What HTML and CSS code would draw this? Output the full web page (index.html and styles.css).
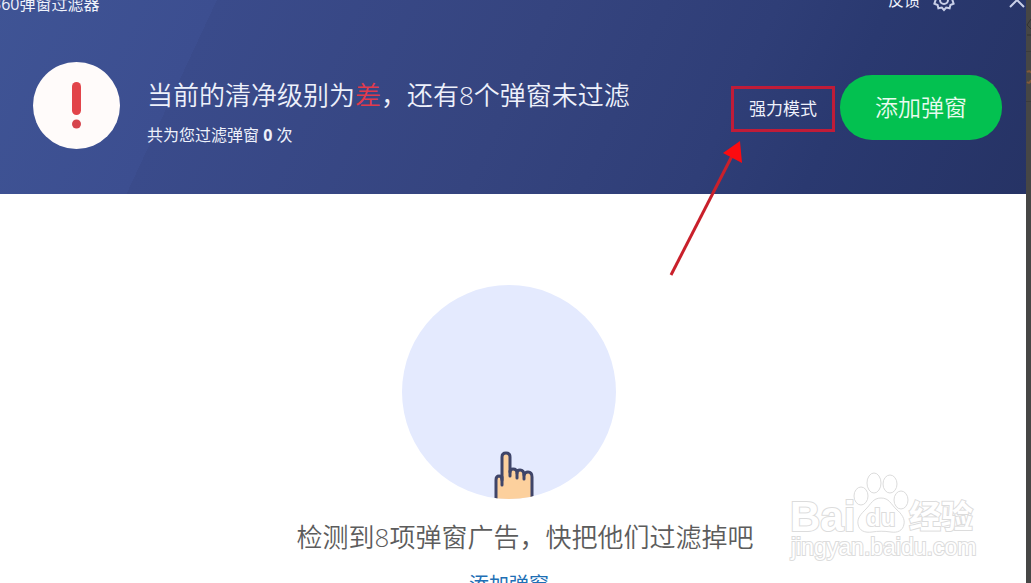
FILE: index.html
```html
<!DOCTYPE html>
<html lang="zh-CN">
<head>
  <meta charset="UTF-8">
  <title>弹窗过滤器</title>
  <meta name="viewport" content="width=device-width, initial-scale=1" />
  <link rel="stylesheet" href="styles.css">
</head>
<body>
  <div class="window">
    <header class="header">
      <div class="topbar">
        <span class="app-name">360弹窗过滤器</span>
        <div class="tools">
          <a class="feedback" href="#">反馈</a>
          <button class="icon-btn gear" type="button" aria-label="设置">
            <svg width="24" height="24" viewBox="0 0 24 24"><path d="M12 2 L14.2 4.4 L17.6 3.7 L18.4 7 L21.6 8.3 L20.4 12 L21.6 15.7 L18.4 17 L17.6 20.3 L14.2 19.6 L12 22 L9.8 19.6 L6.4 20.3 L5.6 17 L2.4 15.7 L3.6 12 L2.4 8.3 L5.6 7 L6.4 3.7 L9.8 4.4 Z"/><circle cx="12" cy="12" r="4"/></svg>
          </button>
          <button class="icon-btn" type="button" aria-label="关闭">
            <svg width="18" height="18" viewBox="0 0 18 18"><path d="M2 2 L16 16 M16 2 L2 16"/></svg>
          </button>
        </div>
      </div>
      <div class="hero">
        <svg class="alert" width="87" height="87" viewBox="0 0 87 87">
          <circle cx="43.5" cy="43.5" r="43.5" fill="#fffbfa"/>
          <rect x="39" y="20" width="9" height="33" rx="4.5" fill="#e2444a"/>
          <circle cx="43.5" cy="62" r="4.5" fill="#d6454d"/>
        </svg>
        <div class="status">
          <h1>当前的清净级别为<span class="bad">差</span>，还有8个弹窗未过滤</h1>
          <p>共为您过滤弹窗 <b>0</b> 次</p>
        </div>
        <div class="mode">
          <button class="mode-btn" type="button">强力模式</button>
          <svg class="arrow" width="76" height="138" viewBox="0 0 76 138">
            <path d="M2 136 L64 15" stroke="#c9202b" stroke-width="3" fill="none"/>
            <path d="M71 2 L54 14 L73 24 Z" fill="#fb0b10"/>
          </svg>
        </div>
        <button class="add-btn" type="button">添加弹窗</button>
      </div>
    </header>

    <main class="content">
      <svg class="picture" width="214" height="214" viewBox="0 0 214 214">
        <clipPath id="round"><circle cx="107" cy="107" r="107"/></clipPath>
        <circle cx="107" cy="107" r="107" fill="#e4eafe"/>
        <g clip-path="url(#round)">
          <path d="M94 216 V195 Q94 191 97 191 Q100 191 100 195 V172 Q100 168 104 168 Q108 168 108 172 V187 Q108 184 111 184 Q115 184 115 188 Q115 185 118 185 Q122 185 122 190 Q123 187 126 187 Q130 187 130 192 V216 Z" fill="#fcd09d" stroke="#3f4569" stroke-width="3" stroke-linejoin="round"/>
          <path d="M100 192 V200 M108 186 V191 M115 188 V193 M122 189 V194" stroke="#3f4569" stroke-width="3" stroke-linecap="round"/>
        </g>
      </svg>
      <p class="message">检测到8项弹窗广告，快把他们过滤掉吧</p>
      <a class="add-link" href="#">添加弹窗</a>
    </main>

    <svg class="watermark" width="192" height="96" viewBox="0 0 192 96">
      <text class="wm-logo" x="4" y="62">Bai</text>
      <ellipse cx="75" cy="27" rx="7" ry="9"/>
      <ellipse cx="88" cy="14" rx="7" ry="10"/>
      <ellipse cx="104" cy="15" rx="7" ry="9"/>
      <ellipse cx="115" cy="31" rx="7" ry="9"/>
      <path d="M95 29 C103 29 105 35 110 40 C116 45 119 50 118 55 C117 62 111 64 105 63 C98 62 92 62 86 63 C79 64 73 62 72 55 C71 49 75 45 80 40 C85 35 87 29 95 29 Z"/>
      <text class="wm-du" x="80" y="57">du</text>
      <text class="wm-cn" x="123" y="59">经验</text>
      <text class="wm-url" x="5" y="86">jingyan.baidu.com</text>
    </svg>
  </div>
  <div class="edge">
    <svg width="5" height="110" viewBox="0 0 5 110">
      <path d="M5 19 L1 25 L5 29 M1 35 H5" stroke="#333" fill="none"/>
      <path d="M0 51.5 H5 M0 101.5 H5" stroke="#3c3c3b"/>
      <path d="M1 72 Q4 70 5 73 M1 82 Q4 84 5 80" stroke="#80593a" stroke-width="2" fill="none"/>
    </svg>
  </div>
</body>
</html>
```
FILE: styles.css
```css
* { box-sizing: border-box; }
body { margin: 0; display: flex; height: 100vh; overflow: hidden; background: #fff; font-family: "Open Sans", "Noto Sans CJK SC", sans-serif; font-weight: 350; }
h1, p { margin: 0; font-weight: 350; }
button { border: 0; padding: 0; background: none; color: inherit; font: inherit; }
a { text-decoration: none; }

/* window is shifted past the left edge of the screen */
.window { position: relative; flex: 1; margin-left: -8px; }
.header { color: #eef1fb; background: linear-gradient(115deg, #3f5495 0%, #3c4e90 20%, #3a4b8b 20%, #35447f 50%, #2f3e77 70%, #2a3970 80%, #263365 100%); padding: 0 24px 41px 41px; }
.topbar { display: flex; justify-content: space-between; height: 8px; margin: 0 -24px 0 -41px; font-size: 16px; line-height: 8px; font-weight: 400; }
.tools { display: flex; align-items: center; gap: 12px; height: 0; }
.feedback { color: inherit; }
.icon-btn { display: flex; }
.icon-btn svg { fill: none; stroke: #c9d0e8; stroke-width: 2; }
.gear { margin-right: 40px; }

.hero { display: flex; align-items: center; padding-top: 49px; }
.alert { flex: none; }
.status { flex: 1; margin-left: 27px; padding-top: 16px; }
.status h1 { font-size: 26px; line-height: 44px; white-space: nowrap; }
.status p { font-size: 16px; line-height: 36px; font-weight: 400; }
.status b { font-weight: 700; }
.bad { color: #e23a4c; }
.mode { position: relative; margin: 8px 5px 0 0; }
.mode-btn { display: block; padding: 0 15px; border: 3px solid #c01c38; font-size: 17px; line-height: 40px; font-weight: 400; }
.arrow { position: absolute; top: 53px; left: -62px; }
.add-btn { width: 162px; margin-top: 4px; border-radius: 32px; background: #03c150; color: #e9fbef; font-size: 23px; line-height: 65px; }

.content { display: flex; flex-direction: column; align-items: center; padding-top: 91px; }
.message { margin-top: 18px; padding-left: 32px; color: #5c5c5c; font-size: 26px; line-height: 40px; }
.add-link { margin-top: 12px; color: #1e6fb5; font-size: 20px; line-height: 32px; font-weight: 400; }

.watermark { position: absolute; right: 48px; bottom: 18px; fill: #fff; stroke: #dcdcdc; stroke-width: 1px; }
.watermark text { stroke-width: 2px; paint-order: stroke; }
.watermark .wm-logo { font: 700 42px "Liberation Sans", sans-serif; }
.watermark .wm-du { font: 700 24px "Liberation Sans", sans-serif; }
.watermark .wm-cn { font: 700 32px "Noto Sans CJK SC", sans-serif; }
.watermark .wm-url { font: 400 23px "Liberation Sans", sans-serif; }

.edge { width: 5px; background: #464645; }
```
